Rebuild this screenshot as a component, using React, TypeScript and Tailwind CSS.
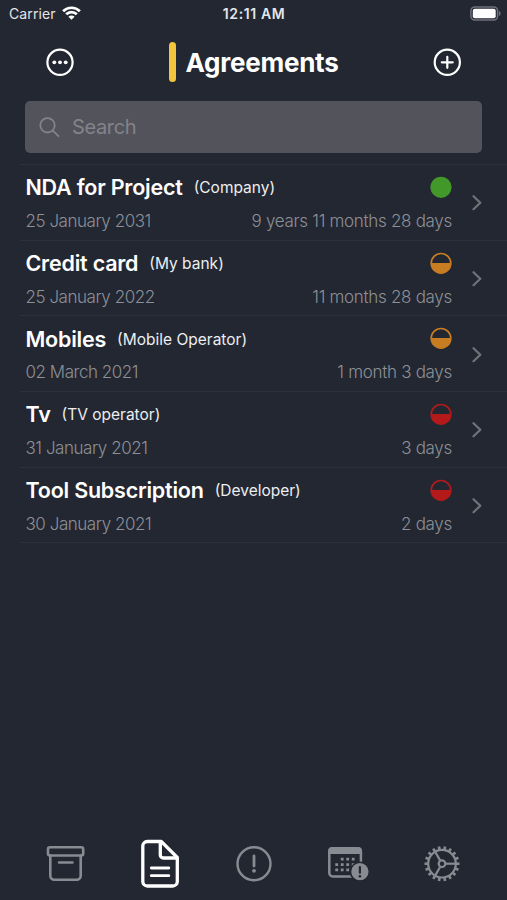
import React from 'react';

type Status = 'ok' | 'warning' | 'critical';

interface Agreement {
    id: number;
    title: string;
    party: string;
    date: string;
    remaining: string;
    status: Status;
}

const agreements: Agreement[] = [
    { id: 1, title: 'NDA for Project', party: 'Company', date: '25 January 2031', remaining: '9 years 11 months 28 days', status: 'ok' },
    { id: 2, title: 'Credit card', party: 'My bank', date: '25 January 2022', remaining: '11 months 28 days', status: 'warning' },
    { id: 3, title: 'Mobiles', party: 'Mobile Operator', date: '02 March 2021', remaining: '1 month 3 days', status: 'warning' },
    { id: 4, title: 'Tv', party: 'TV operator', date: '31 January 2021', remaining: '3 days', status: 'critical' },
    { id: 5, title: 'Tool Subscription', party: 'Developer', date: '30 January 2021', remaining: '2 days', status: 'critical' },
];

const statusColor: Record<Status, string> = {
    ok: 'text-[#42992a]',
    warning: 'text-[#c97d22]',
    critical: 'text-[#b51a1b]',
};

const StatusDot: React.FC<{ status: Status }> = ({ status }) => (
    <svg viewBox="0 0 22 22" className={`size-[22px] ${statusColor[status]}`}>
        {status === 'ok' ? (
            <circle cx="11" cy="11.3" r="10.6" fill="currentColor" />
        ) : (
            <>
                <circle cx="11" cy="11.3" r="9.8" fill="none" stroke="currentColor" strokeWidth="1.7" />
                <path d="M1 11H21A10 10 0 0 1 1 11Z" fill="currentColor" />
            </>
        )}
    </svg>
);

const StatusBar: React.FC = () => (
    <div className="grid h-7 grid-cols-3 items-center pr-[6px] pb-[2px] pl-[9px] text-[#e4e5ea]">
        <div className="flex items-center gap-[6px]">
            <span className="text-[14px] tracking-[0.1px]">Carrier</span>
            <svg viewBox="0 0 19 14" className="h-[14px] w-[19px]" fill="none" stroke="#fff" strokeWidth="2.7">
                <path d="M1.1 5.2a11.9 11.9 0 0 1 16.8 0" />
                <path d="M4.2 8.3a7.5 7.5 0 0 1 10.6 0" />
                <path d="M9.5 13.8 6.4 10.7a4.4 4.4 0 0 1 6.2 0z" fill="#fff" stroke="none" />
            </svg>
        </div>
        <span className="-ml-[2px] pt-px text-center text-[14px] font-semibold tracking-[0.6px] whitespace-nowrap">12:11 AM</span>
        <svg viewBox="0 0 31 15" className="h-[15px] w-[31px] justify-self-end">
            <rect x="0.9" y="0.9" width="26.7" height="13.2" rx="4" fill="none" stroke="#6f7279" strokeWidth="1.5" />
            <rect x="2.8" y="2.8" width="22.9" height="9.4" rx="2" fill="#fff" />
            <path d="M29 5v5c1-.4 1.6-1.3 1.6-2.5S30 5.400 29 5z" fill="#6f7279" />
        </svg>
    </div>
);

const Header: React.FC = () => (
    <div className="flex h-[73px] items-center justify-between pr-[46px] pb-[5px] pl-[46px]">
        <button>
            <svg viewBox="0 0 28 28" className="size-7" fill="none" stroke="#fff" strokeWidth="2.2">
                <circle cx="14" cy="14.300" r="12.6" />
                <g fill="#fff" stroke="none">
                    <circle cx="8.300" cy="14.300" r="1.9" />
                    <circle cx="14" cy="14.300" r="1.9" />
                    <circle cx="19.700" cy="14.300" r="1.9" />
                </g>
            </svg>
        </button>
        <div className="flex items-center gap-[10px]">
            <span className="h-10 w-[7px] rounded-full bg-[#f2c53d]" />
            <h1 className="pt-px text-[26px] leading-8 font-bold tracking-[-0.25px] text-white">Agreements</h1>
        </div>
        <button>
            <svg viewBox="0 0 28 28" className="size-7" fill="none" stroke="#fff" strokeWidth="2.2" strokeLinecap="round">
                <circle cx="14.300" cy="14.300" r="12.6" />
                <path d="M14.300 8.800v11M8.800 14.300h11" />
            </svg>
        </button>
    </div>
);

const SearchField: React.FC = () => (
    <div className="mr-[25px] ml-[25px] flex h-[52px] items-center gap-[12px] rounded-[5px] bg-[#53535b] pl-[14px] text-[#83838a]">
        <svg viewBox="0 0 21 21" className="size-[21px]" fill="none" stroke="currentColor" strokeWidth="1.8" strokeLinecap="round">
            <circle cx="8.500" cy="8.300" r="7.200" />
            <path d="M13.800 13.600 19.500 19.200" />
        </svg>
        <span className="text-[20px] tracking-[-0.35px]">Search</span>
    </div>
);

const AgreementRow: React.FC<{ agreement: Agreement }> = ({ agreement }) => (
    <li className="ml-5 flex h-[75.7px] items-center border-b border-[#2d313b] pt-[2px] pr-[25px] pl-[5.5px]">
        <div className="flex-1">
            <div className="flex h-[32px] items-center justify-between">
                <div className="flex items-center gap-[11px] pt-px whitespace-nowrap">
                    <span className="text-[21.5px] leading-7 font-semibold tracking-[-0.22px] text-white">{agreement.title}</span>
                    <span className="pt-[2px] text-[15.5px] leading-7 text-[#eceef2]">({agreement.party})</span>
                </div>
                <StatusDot status={agreement.status} />
            </div>
            <div className="mt-[5px] flex h-7 items-center justify-between text-[17px] font-light text-[#8d9097]">
                <span className="tracking-[-0.46px]">{agreement.date}</span>
                <span className="tracking-[-0.3px]">{agreement.remaining}</span>
            </div>
        </div>
        <svg viewBox="0 0 10 16" className="ml-[20px] h-4 w-[10px]" fill="none" stroke="#70737a" strokeWidth="2.2" strokeLinecap="round" strokeLinejoin="round">
            <path d="M1.500 1.200 8.300 7.700 1.500 14.200" />
        </svg>
    </li>
);

const gearTeeth = Array.from({ length: 18 }, (_, i) => i * 20);

const TabBar: React.FC = () => (
    <nav className="flex h-[73px] items-center justify-between pr-[47px] pl-[46px] text-[#898b92]">
        <svg viewBox="0 0 39 36" className="h-9 w-[39px]" fill="none" stroke="currentColor" strokeWidth="2.6" strokeLinecap="round" strokeLinejoin="round">
            <rect x="2" y="1.300" width="35.200" height="8.200" rx="2" />
            <path d="M4.300 9.500V29.700a4 4 0 0 0 4 4h22.400a4 4 0 0 0 4-4V9.500M13 16.500h13.500" />
        </svg>
        <svg viewBox="0 0 40 50" className="h-[50px] w-10 text-white" fill="none" stroke="currentColor" strokeWidth="3.300" strokeLinecap="round" strokeLinejoin="round">
            <path d="M7.300 2.500H21.300L37.300 18.500V42.500a4.500 4.500 0 0 1-4.500 4.500H7.300A4.500 4.500 0 0 1 2.800 42.500V7A4.500 4.500 0 0 1 7.300 2.500Z" />
            <path d="M20.300 3V16a3 3 0 0 0 3 3H36.800" />
            <path d="M11.300 29H28.800M11.300 36.700H28.800" strokeWidth="2.800" />
        </svg>
        <svg viewBox="0 0 36 36" className="size-9" fill="none" stroke="currentColor" strokeWidth="2.400" strokeLinecap="round">
            <circle cx="18" cy="17.700" r="16.500" />
            <path d="M18 10v10" strokeWidth="2.800" />
            <circle cx="18" cy="24.800" r="1.900" fill="currentColor" stroke="none" />
        </svg>
        <svg viewBox="0 0 42 36" className="h-9 w-[42px]" fill="none">
            <rect x="2.300" y="2.300" width="31.600" height="28.200" rx="3.500" stroke="currentColor" strokeWidth="2.500" />
            <path d="M1.100 8V5a4 4 0 0 1 4-4h26a4 4 0 0 1 4 4v3z" fill="currentColor" />
            <g fill="currentColor">
                <path d="M13.800 11.700h2.800v2.800h-2.800zM19.300 11.700h2.800v2.800h-2.800zM24.800 11.700h2.800v2.800h-2.800z" />
                <path d="M8.300 17.200h2.800v2.800H8.300zM13.800 17.200h2.800v2.800h-2.800zM19.300 17.200h2.800v2.800h-2.800zM24.800 17.200h2.800v2.800h-2.800z" />
                <path d="M8.300 22.500h2.800v2.800H8.300zM13.800 22.500h2.800v2.800h-2.800zM19.300 22.500h2.800v2.800h-2.800z" />
            </g>
            <circle cx="32.900" cy="25.700" r="9.400" fill="currentColor" stroke="#232731" strokeWidth="1.500" />
            <path d="M32.900 21.200v5.500" stroke="#232731" strokeWidth="2.200" strokeLinecap="round" />
            <circle cx="32.900" cy="30.200" r="1.300" fill="#232731" />
        </svg>
        <svg viewBox="-18 -17.700 36 36" className="size-9" fill="none" stroke="currentColor" strokeWidth="2.200">
            <circle r="13.800" />
            <circle r="3.300" />
            {[0, 120, 240].map(angle => (
                <path key={angle} d="M3.500 0H13.500" transform={`rotate(${angle})`} />
            ))}
            {gearTeeth.map(angle => (
                <path key={angle} d="M14 0H17.500" strokeWidth="2.600" strokeLinecap="butt" transform={`rotate(${angle})`} />
            ))}
        </svg>
    </nav>
);

const App: React.FC = () => {
    return (
        <div className="flex h-[900px] w-[507px] flex-col overflow-hidden bg-[#232731] font-['Inter','Liberation_Sans',sans-serif]">
            <StatusBar />
            <Header />
            <SearchField />
            <ul className="mt-[11px]">
                <li className="ml-5 border-b border-[#2d313b]" />
                {agreements.map(agreement => (
                    <AgreementRow key={agreement.id} agreement={agreement} />
                ))}
            </ul>
            <div className="flex-1" />
            <TabBar />
        </div>
    );
};

export default App;
